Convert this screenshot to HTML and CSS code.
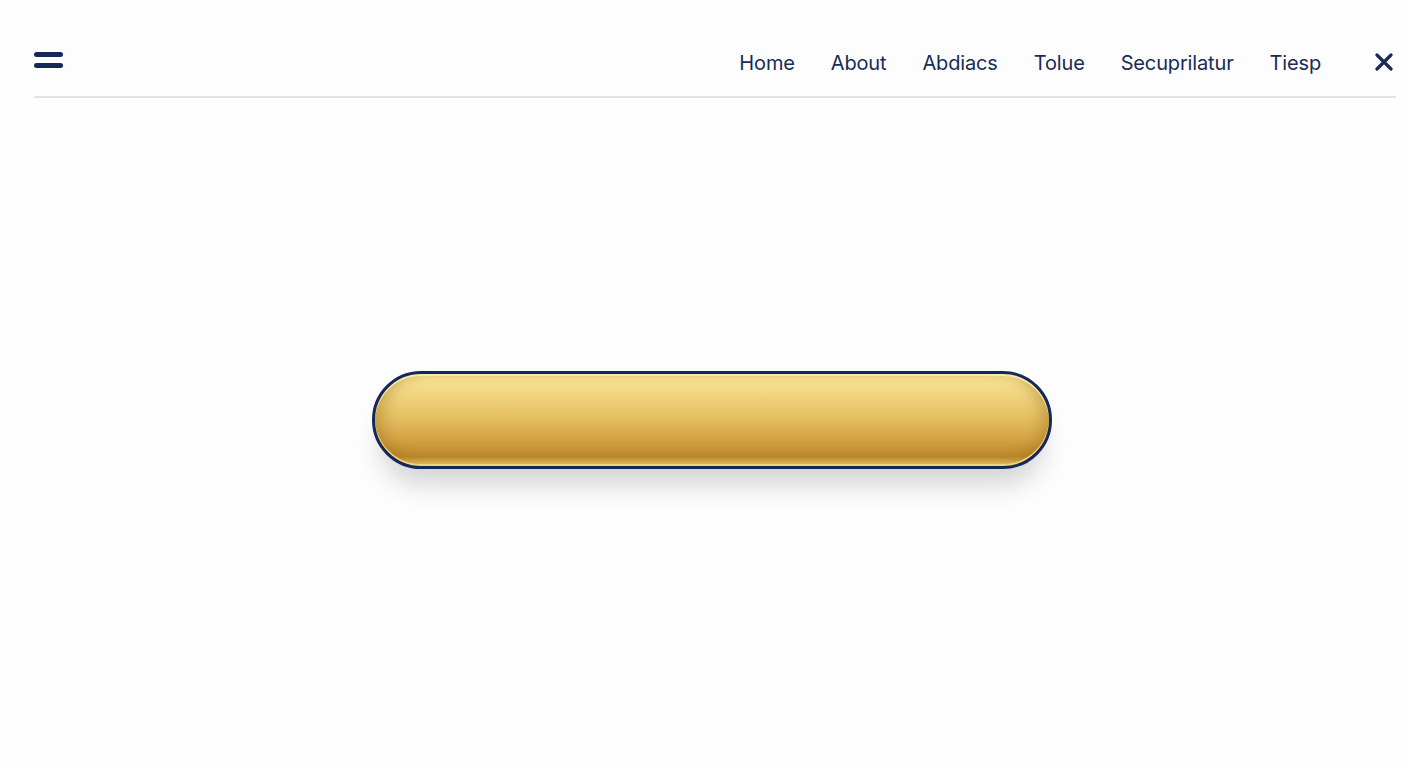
FILE: index.html
```html
<!DOCTYPE html>
<html lang="en">
  <head>
    <meta charset="UTF-8" />
    <meta name="viewport" content="width=device-width, initial-scale=1.0" />
    <title>Menu</title>
    <link rel="stylesheet" href="styles.css">
  </head>
  <body>
    <header class="topbar">
      <button class="menu-toggle" aria-label="Menu">
        <span></span>
        <span></span>
      </button>
      <nav class="nav">
        <a href="#">Home</a>
        <a href="#">About</a>
        <a href="#">Abdiacs</a>
        <a href="#">Tolue</a>
        <a href="#">Secuprilatur</a>
        <a href="#">Tiesp</a>
      </nav>
      <button class="close" aria-label="Close">
        <svg width="18" height="18" viewBox="0 0 18 18">
          <path d="M2 2 L16 16 M16 2 L2 16" stroke="#1a2b55" stroke-width="3.2" stroke-linecap="round" fill="none" />
        </svg>
      </button>
    </header>

    <main class="stage">
      <button class="gold-pill" aria-label="Action"></button>
    </main>
  </body>
</html>
```

FILE: styles.css
```css
body {
  font-family: Inter, 'Noto Sans', sans-serif;
  margin: 0;
  padding: 0;
  background: #fdfdfd;
  color: #1a2b55;
  height: 100vh;
  overflow: hidden;
}

.topbar {
  display: flex;
  align-items: center;
  height: 70px;
  padding-top: 26px;
  margin: 0 12px 0 34px;
  border-bottom: 2px solid #e3e3e3;
}

.menu-toggle {
  display: flex;
  flex-direction: column;
  gap: 6px;
  background: none;
  border: none;
  padding: 0;
  margin-top: -2px;
  cursor: pointer;
}

.menu-toggle span {
  display: block;
  width: 29px;
  height: 5px;
  border-radius: 3px;
  background: #14295a;
}

.nav {
  display: flex;
  gap: 36px;
  margin-left: auto;
  margin-top: 4px;
}

.nav a {
  color: #1a2b55;
  text-decoration: none;
  font-size: 20px;
  letter-spacing: -0.15px;
}

.close {
  background: none;
  border: none;
  padding: 0;
  margin-left: 54px;
  margin-right: 3px;
  margin-top: 2px;
  display: flex;
  cursor: pointer;
}

.stage {
  display: flex;
  justify-content: center;
  padding-top: 273px;
  padding-left: 16px;
}

.gold-pill {
  width: 680px;
  height: 98px;
  border: 3px solid #13295b;
  border-radius: 49px;
  background: linear-gradient(180deg, #f8e69a 0%, #f2d985 18%, #e6c265 45%, #d2a242 72%, #b9872b 90%, #d6ab4f 95%, #f2da88 100%);
  box-shadow:
    inset 0 2px 0 #f9eaa8,
    inset 0 -2px 0 #f0d47e,
    inset 12px 0 14px -4px rgba(160, 110, 25, 0.4),
    inset -12px 0 14px -4px rgba(160, 110, 25, 0.4),
    0 24px 26px -8px rgba(0, 0, 0, 0.16);
  cursor: pointer;
}
```
